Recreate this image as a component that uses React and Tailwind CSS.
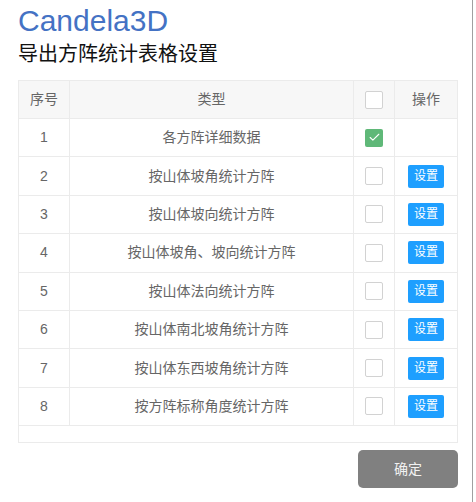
import { Check } from "lucide-react";

const rows = [
  { no: 1, name: "各方阵详细数据", checked: true, setting: false },
  { no: 2, name: "按山体坡角统计方阵", checked: false, setting: true },
  { no: 3, name: "按山体坡向统计方阵", checked: false, setting: true },
  { no: 4, name: "按山体坡角、坡向统计方阵", checked: false, setting: true },
  { no: 5, name: "按山体法向统计方阵", checked: false, setting: true },
  { no: 6, name: "按山体南北坡角统计方阵", checked: false, setting: true },
  { no: 7, name: "按山体东西坡角统计方阵", checked: false, setting: true },
  { no: 8, name: "按方阵标称角度统计方阵", checked: false, setting: true },
];

function Box({ checked }) {
  if (checked) {
    return (
      <span className="inline-flex w-[18px] h-[18px] items-center justify-center rounded-[2px] bg-[#5FB878]">
        <Check size={13} strokeWidth={2} className="text-white" />
      </span>
    );
  }
  return <span className="inline-block w-[18px] h-[18px] rounded-[2px] border border-[#d2d2d2] bg-white" />;
}

export default function App() {
  return (
    <div className="w-[473px] min-h-[502px] bg-white border-r border-[#a0a0a0] font-['Liberation_Sans','Noto_Sans_CJK_SC',sans-serif]">
      <div className="pl-[18px] pr-[15px]">
        <h1 className="pt-[6px] text-[30px] leading-[30px] text-[#4472c4]">Candela3D</h1>
        <h2 className="mt-[4px] text-[20px] leading-[28px] text-[#111]">导出方阵统计表格设置</h2>

        {/* table */}
        <div className="mt-[12px] w-[440px] border border-[#ebebeb] text-[14px] text-[#666]">
          <div className="grid grid-cols-[51px_284px_41px_1fr] h-[38px] bg-[#f7f7f7] border-b border-[#ebebeb]">
            <div className="flex items-center justify-center border-r border-[#ebebeb]">序号</div>
            <div className="flex items-center justify-center border-r border-[#ebebeb]">类型</div>
            <div className="flex items-center justify-center border-r border-[#ebebeb]">
              <Box checked={false} />
            </div>
            <div className="flex items-center justify-center">操作</div>
          </div>
          {rows.map((r) => (
            <div key={r.no} className="grid grid-cols-[51px_284px_41px_1fr] h-[38.4px] border-b border-[#ebebeb]">
              <div className="flex items-center justify-center border-r border-[#ebebeb]">{r.no}</div>
              <div className="flex items-center justify-center border-r border-[#ebebeb]">{r.name}</div>
              <div className="flex items-center justify-center border-r border-[#ebebeb]">
                <Box checked={r.checked} />
              </div>
              <div className="flex items-center justify-center">
                {r.setting && (
                  <button className="h-[23px] px-[6px] rounded-[2px] bg-[#1E9FFF] text-white text-[12px] leading-[23px]">
                    设置
                  </button>
                )}
              </div>
            </div>
          ))}
          <div className="h-[16px]" />
        </div>

        <div className="flex justify-end w-[440px] mt-[7px]">
          <button className="w-[100px] h-[38px] rounded-[5px] bg-[#808080] text-[#f2f2f2] text-[14px]">确定</button>
        </div>
      </div>
    </div>
  );
}
